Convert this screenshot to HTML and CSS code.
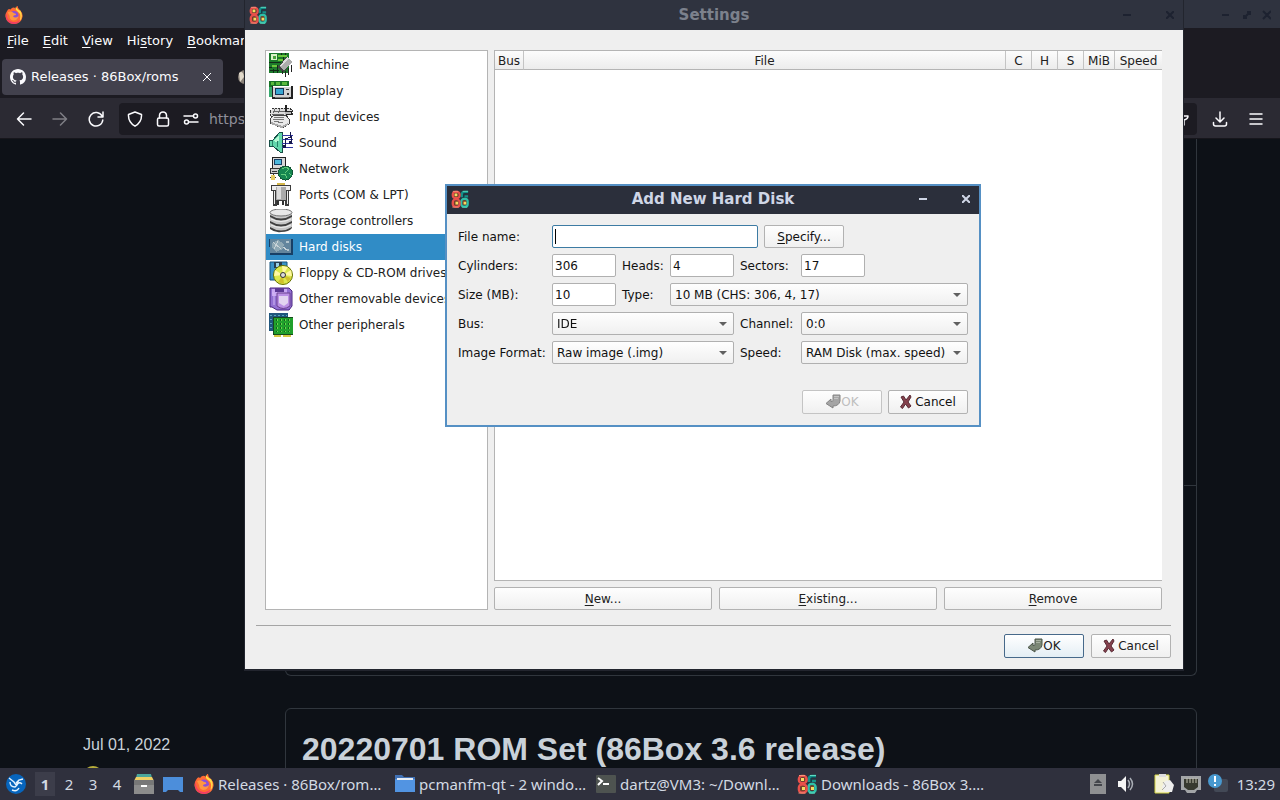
FILE: index.html
```html
<!DOCTYPE html>
<html lang="en">
<head>
<meta charset="utf-8">
<title>Add New Hard Disk</title>
<link rel="stylesheet" href="styles.css">
</head>
<body>
<svg class="defs" aria-hidden="true">
  <symbol id="box86" viewBox="0 0 20 20">
    <path d="M11 9V4Q11 1 14 1H19V4H15V7H19" fill="#123f48"/>
    <g fill="none" stroke-width="2.6">
      <path d="M12 8V5Q12 2 15 2H19M15 7h4" stroke="#15918a"/>
      <rect x="11.500" y="10" width="7" height="8.500" rx="3" stroke="#2fc0a8"/>
      <rect x="2" y="2" width="7.500" height="7" rx="3" stroke="#e8504a"/>
      <rect x="2" y="10.500" width="7.500" height="8" rx="3" stroke="#e8504a"/>
    </g>
    <path d="M3.500 3.500h4.500v4H3.500zM3.500 12h4.500v5H3.500zM13 11.500h4v5h-4z" fill="#7b4428"/>
    <path d="M4 4h3v3H4zM5 13h3v3H5zM14 13h3v3h-3z" fill="#f5dc62"/>
    <path d="M2 1.500h6M1.500 19h7" stroke="#f9937a" fill="none"/>
    <path d="M13 1.500h6M12 19h6" stroke="#5fdcc0" fill="none"/>
  </symbol>
  <symbol id="firefox" viewBox="0 0 20 20">
    <path d="M2 6Q4 2 6 4Q9 0 12 3Q13-1 14 0Q14 3 17 5Q20 8 19.500 12Q18 20 10 20Q2 20 .5 12Q0 9 2 6Z" fill="#ff6a34"/>
    <path d="M12 1Q15 5 17 5Q21 12 16 17Q19 9 14 6Q11 4 12 1Z" fill="#ffdc46"/>
    <path d="M2 7Q1 14 6 17Q12 20 17 15Q15 20 9 20Q1 18 1 11Z" fill="#f03c68"/>
    <circle cx="10" cy="10.500" r="5" fill="#8a50d8"/>
    <path d="M3 7Q7 5 10 8Q13 8 12 10Q9 10 9 12Q12 14 15 11Q14 16 9 16Q5 15 5 11Z" fill="#ff9740"/>
  </symbol>
  <symbol id="enter" viewBox="0 0 16 16">
    <path d="M8 1H15V7Q14 12 8 12V14L1 9.500L6 5V7.500Q9 8 8 5Z" fill="#7b8775" stroke="#4b5548"/>
    <path d="M9 2.500H14M9 4.500H13" stroke="#a7b0a0"/>
  </symbol>
  <symbol id="cross" viewBox="0 0 12 14">
    <path d="M1 2L3.500 1L6 5L10 0L11 2L8 7L11 11L8.500 13L5.500 9L2.500 13.500L.5 12L4 7Z" fill="#85414d" stroke="#582a34"/>
  </symbol>
</svg>

<main class="desktop">
  <section class="browser" aria-label="Firefox">
    <header class="browser-title">
      <svg class="i18"><use href="#firefox"/></svg>
      <svg class="browser-controls" viewBox="0 0 50 12" aria-hidden="true"><path d="M1 6h7M23 9l6-6M26 3h3v3M23 6v3h3M42 2l8 8M50 2l-8 8"/></svg>
    </header>
    <nav class="menubar"><a href="#"><u>F</u>ile</a><a href="#"><u>E</u>dit</a><a href="#"><u>V</u>iew</a><a href="#">Hi<u>s</u>tory</a><a href="#"><u>B</u>ookmarks</a></nav>
    <div class="tabs">
      <div class="tab">
        <svg class="i16" viewBox="0 0 16 16"><path fill="#fbfbfe" d="M8 0C3.580 0 0 3.580 0 8c0 3.540 2.290 6.530 5.470 7.590.4.070.55-.17.55-.38 0-.19-.01-.82-.01-1.490-2.010.37-2.530-.49-2.690-.94-.09-.23-.48-.94-.82-1.130-.28-.15-.68-.52-.01-.53.63-.01 1.080.58 1.230.82.72 1.210 1.870.87 2.330.66.070-.52.28-.87.51-1.070-1.780-.2-3.640-.89-3.640-3.950 0-.87.31-1.590.82-2.150-.08-.2-.36-1.020.08-2.120 0 0 .67-.21 2.200.82.64-.18 1.320-.27 2-.27s1.360.09 2 .27c1.530-1.040 2.200-.82 2.200-.82.44 1.100.16 1.920.08 2.120.51.56.82 1.270.82 2.150 0 3.070-1.870 3.750-3.650 3.950.29.25.54.73.54 1.480 0 1.070-.01 1.930-.01 2.200 0 .21.15.46.55.38A8 8 0 0016 8c0-4.420-3.580-8-8-8z"/></svg>
        <span>Releases · 86Box/roms</span>
        <button class="tab-close" aria-label="Close tab"><svg viewBox="0 0 8 8"><path d="M0 0l8 8M8 0L0 8"/></svg></button>
      </div>
      <svg class="i16" viewBox="0 0 16 16"><circle cx="8" cy="8" r="7" fill="#8a8279"/><path d="M2 4Q6 1 7 8L3 13Z" fill="#e2dacb"/></svg>
    </div>
    <div class="toolbar">
      <button aria-label="Back"><svg class="line" viewBox="0 0 16 16"><path d="M15 8H1.500M7.500 2L1.500 8l6 6"/></svg></button>
      <button aria-label="Forward" class="dim"><svg class="line" viewBox="0 0 16 16"><path d="M1 8h13.500M8.500 2l6 6-6 6"/></svg></button>
      <button aria-label="Reload"><svg class="line" viewBox="0 0 16 16"><path d="M14 5A6.800 6.800 0 1 0 14.800 9M15 1v5h-5"/></svg></button>
      <div class="urlbar">
        <svg class="line" viewBox="0 0 16 16"><path d="M8 1L14.500 3.500Q15 11 8 15.200Q1 11 1.500 3.500Z"/></svg>
        <svg class="line" viewBox="0 0 16 16"><rect x="2.500" y="7" width="11" height="8" rx="1.500"/><path d="M4.500 7V4Q5 1 8 1T11.500 4V7"/></svg>
        <svg class="line" viewBox="0 0 16 16"><path d="M1 5h9M6 11h9"/><circle cx="12.500" cy="5" r="2"/><circle cx="3.500" cy="11" r="2"/></svg>
        <span>https</span>
        <svg class="line star" viewBox="0 0 16 16"><path d="M8 5h7q0 3-4 4v5"/></svg>
      </div>
      <button aria-label="Downloads"><svg class="line" viewBox="0 0 16 16"><path d="M8 1v9.500M4 7l4 4 4-4M1.500 11.500V13q0 2 2 2h9q2 0 2-2v-1.500"/></svg></button>
      <button aria-label="Menu"><svg class="line" viewBox="0 0 16 16"><path d="M2 3h12M2 8h12M2 13h12"/></svg></button>
    </div>
    <div class="page">
      <div class="release previous"><div class="card"><div class="rule"></div></div></div>
      <article class="release">
        <div class="meta"><time>Jul 01, 2022</time><span class="avatar"></span></div>
        <div class="card"><h1>20220701 ROM Set (86Box 3.6 release)</h1></div>
      </article>
    </div>
  </section>

  <section class="window settings" aria-label="Settings">
    <header class="titlebar">
      <svg class="i18"><use href="#box86"/></svg><h2>Settings</h2>
      <span class="controls"><button aria-label="Minimize"><svg viewBox="0 0 8 8"><path d="M0 4h8"/></svg></button><button aria-label="Close"><svg viewBox="0 0 8 8"><path d="M0 0l8 8M8 0L0 8"/></svg></button></span>
    </header>
    <div class="settings-body">
      <div class="panes">
        <ul class="categories">
          <li><svg viewBox="0 0 24 24" shape-rendering="crispEdges"><path d="M0 0h20v20H0z" fill="#1c7a2b"/><path d="M9 2h9v2H9zM9 6h7v2H9zM3 12h5v2H3z" fill="#6cc63c"/><path d="M2 1h6v6H2z" fill="#d9f1c6"/><path d="M4 3h3v3H4z" fill="#48a13b"/><path d="M0 9h12M0 14h3M8 12v8M4 16v4M12 0v2M16 0v2M1 17h9M14 4v4" stroke="#122a18" fill="none"/><path d="M9 14L18 3l5 6-9 11z" fill="#444"/><path d="M11 13L18 4l5 5-8 9z" fill="#adadad"/><path d="M11 13L18 4l2 1-8 9z" fill="#dedede"/><path d="M13 18v3M16 18v6M19 15v7M22 12v7" stroke="#222"/></svg>Machine</li>
          <li><svg viewBox="0 0 24 24" shape-rendering="crispEdges"><path d="M0 2h20v13H0z" fill="#187325"/><path d="M2 3h3v3H2zM7 3h4v3H7zM13 3h5v3h-5z" fill="#59b93c"/><path d="M0 8h4v10H0z" fill="#35a96d"/><path d="M3 7h21v13H3z" fill="#222"/><path d="M4 7h18v11H4z" fill="#d2d2d2"/><path d="M4 7h18v1H4z" fill="#fff"/><path d="M6 9h9v7H6z" fill="#173155"/><path d="M7 10h7v5H7z" fill="#38a6d1"/><path d="M17 10h3v1h-3M18 14h2v2h-2" fill="#333"/><path d="M6 18h14" stroke="#777"/></svg>Display</li>
          <li><svg viewBox="0 0 24 24" shape-rendering="crispEdges"><path d="M1 6L5 3H20L23 5V9H20L18 12H3L1 9Z" fill="#ddd" stroke="#333" stroke-dasharray="2 1"/><path d="M4 6h12M3 9h12M6 4l-2 4M11 4l-2 4" stroke="#666"/><path d="M16 7V0h1v6h5v3h-5v3" fill="#bbb" stroke="#222"/><path d="M1 14L5 10H16L20 14V19L13 23L1 18Z" fill="#e9e9e9" stroke="#444"/><path d="M5 12h10M4 14h11M5 16l9 2" stroke="#777"/><path d="M2 18l11 4 6-3" fill="none" stroke="#aaa" stroke-width="2"/></svg>Input devices</li>
          <li><svg viewBox="0 0 24 24" shape-rendering="crispEdges"><path d="M0 9h4l7-8h2v20h-2l-7-6H0z" fill="#62d6ac" stroke="#174d45"/><path d="M5 9l5-5v6L6 11z" fill="#b4f9d3"/><path d="M3 10v5M8 10v6" stroke="#278368"/><path d="M13 4.500h11M13 8.500h11M13 12.500h11M13 16.500h11" stroke="#3338a4"/><path d="M16 15V8l6-2v6M21 1v5" stroke="#16184e" fill="none"/><path d="M14 14h3v3h-3zM20 10h3v3h-3z" fill="#16184e"/></svg>Sound</li>
          <li><svg viewBox="0 0 24 24" shape-rendering="crispEdges"><path d="M3 0h13v11H3z" fill="#d7d7d7" stroke="#222"/><path d="M5 2h8v6H5z" fill="#183f66"/><path d="M6 3h6v4H6z" fill="#4db8dc"/><path d="M1 11h12v5H1z" fill="#ccc" stroke="#333"/><path d="M3 14h5M4 17v5M1 20h6" stroke="#333"/><path d="M2 18h4v5H2z" fill="#e6cc62"/><circle cx="16.500" cy="16" r="7" fill="#168650" stroke="#125636"/><path d="M13 12l4-2 3 2-4 4M12 17h4l2 4M20 16l2 2" stroke="#62cc7a" fill="none"/></svg>Network</li>
          <li><svg viewBox="0 0 24 24" shape-rendering="crispEdges"><path d="M8 0h8v3H8z" fill="#d5b749"/><path d="M2 2h20v6h-2v15h-4v-5H8v5H4V8H2z" fill="#3c3c3c"/><path d="M3 3h18v4H3z" fill="#eee"/><path d="M7 4h10v13H7z" fill="#aaa"/><path d="M8 4h4v12H8z" fill="#ddd"/><path d="M5 8h1v13H5M18 8h1v13h-1" fill="#eee"/><path d="M9 18v4M14 18v4" stroke="#333" stroke-width="2"/></svg>Ports (COM &amp; LPT)</li>
          <li><svg viewBox="0 0 24 24"><path d="M1 4v16q5 4 11 3 8 0 11-4V4" fill="#3f3f3f"/><path d="M1 14q11 7 22 0v4q-11 7-22 0zM1 8q11 7 22 0v4q-11 7-22 0zM1 3q11 7 22 0v3q-11 7-22 0z" fill="#c6c6c6"/><ellipse cx="12" cy="3.500" rx="11" ry="3.500" fill="#e8e8e8" stroke="#777"/><path d="M2 10q10 5 20 0M2 16q10 5 20 0" stroke="#eee" fill="none"/></svg>Storage controllers</li>
          <li class="selected"><svg viewBox="0 0 24 24" shape-rendering="crispEdges"><path d="M0 4h24v16H1z" fill="#183f65"/><path d="M1 4h21v14H1z" fill="#63859d"/><path d="M3 8l6-3 6 4-1 5-7 3-4-4z" fill="#8fa8b4"/><path d="M4 7l8 7M9 6l-4 8M14 12l4 3" stroke="#c9d3d8"/><path d="M17 6h3v2h-3zM18 14h2v2h-2z" fill="#b2c4cd"/></svg>Hard disks</li>
          <li><svg viewBox="0 0 24 24"><path d="M1 1h17v18H1z" fill="#3a93c7" stroke="#15537d"/><path d="M5 1h8v6H5z" fill="#273e51"/><path d="M7 2h3v4H7z" fill="#9bd0e6"/><circle cx="14" cy="14" r="9.500" fill="#dce84c" stroke="#657000"/><path d="M14 14L6 9l-1 6zM14 14l8-5 1 6zM14 14l-1-9 6 1z" fill="#fff8a2"/><path d="M14 14l-5 7 6 2zM14 14l8 3-3 4z" fill="#d0c12b"/><circle cx="14" cy="14" r="2.500" fill="#ddd" stroke="#333"/></svg>Floppy &amp; CD-ROM drives</li>
          <li><svg viewBox="0 0 24 24"><path d="M1 1h19l3 3v15l-3 4H8l-5-3H1z" fill="#9370d3" stroke="#48257f"/><path d="M3 2h15v7H3z" fill="#c9a8f3"/><path d="M6 1h9v4H6z" fill="#5c3894"/><path d="M8 6h13v13q-7 5-13 0z" fill="#bb91e4" stroke="#6b418f"/><path d="M10 9h9v7l-4 3-5-3z" fill="#e3d5f0"/><path d="M3 6h2v12" fill="none" stroke="#d2b7f4"/></svg>Other removable devices</li>
          <li><svg viewBox="0 0 24 24" shape-rendering="crispEdges"><path d="M0 0h19v18H0z" fill="#20567d"/><path d="M1 2h17M1 6h17M1 10h17M1 14h17" stroke="#59a8bc" stroke-dasharray="2 2"/><path d="M4 4h20v17H4z" fill="#20a02c" stroke="#164b1c"/><path d="M7 6v13M11 6v13M15 6v13M19 6v13" stroke="#155f20" stroke-dasharray="2 2"/><path d="M8 6v13M12 6v13M16 6v13M20 6v13" stroke="#65d948" stroke-dasharray="2 2"/><path d="M5 22h7v2H5zM14 22h8v2h-8z" fill="#d5c943"/></svg>Other peripherals</li>
        </ul>
        <div class="disks">
          <div class="table-frame"><table><colgroup><col class="c-bus"><col><col class="c-c"><col class="c-c"><col class="c-c"><col class="c-mib"><col class="c-speed"></colgroup><thead><tr><th>Bus</th><th>File</th><th>C</th><th>H</th><th>S</th><th>MiB</th><th>Speed</th></tr></thead></table></div>
          <div class="actions"><button class="btn"><span><u>N</u>ew...</span></button><button class="btn"><span><u>E</u>xisting...</span></button><button class="btn"><span><u>R</u>emove</span></button></div>
        </div>
      </div>
      <footer class="buttons"><button class="btn default"><svg class="i16"><use href="#enter"/></svg>OK</button><button class="btn"><svg class="i-cross"><use href="#cross"/></svg>Cancel</button></footer>
    </div>
  </section>

  <section class="window dialog" role="dialog" aria-label="Add New Hard Disk">
    <header class="titlebar">
      <svg class="i18"><use href="#box86"/></svg><h2>Add New Hard Disk</h2>
      <span class="controls"><button aria-label="Minimize"><svg viewBox="0 0 8 8"><path d="M0 4h8"/></svg></button><button aria-label="Close"><svg viewBox="0 0 8 8"><path d="M0 0l8 8M8 0L0 8"/></svg></button></span>
    </header>
    <form class="dialog-body">
      <div class="fields">
        <label for="file">File name:</label>
        <div class="file-row"><input id="file" type="text" autofocus><i class="caret"></i><button type="button" class="btn"><span><u>S</u>pecify...</span></button></div>
        <label for="cyl">Cylinders:</label><input id="cyl" type="text" value="306">
        <label for="heads">Heads:</label><input id="heads" type="text" value="4">
        <label for="sectors">Sectors:</label><input id="sectors" class="short" type="text" value="17">
        <label for="size">Size (MB):</label><input id="size" type="text" value="10">
        <label for="type">Type:</label><div class="select span3"><select id="type"><option>10 MB (CHS: 306, 4, 17)</option></select></div>
        <label for="bus">Bus:</label><div class="select span3"><select id="bus"><option>IDE</option></select></div>
        <label for="channel">Channel:</label><div class="select"><select id="channel"><option>0:0</option></select></div>
        <label for="format">Image Format:</label><div class="select span3"><select id="format"><option>Raw image (.img)</option></select></div>
        <label for="speed">Speed:</label><div class="select"><select id="speed"><option>RAM Disk (max. speed)</option></select></div>
      </div>
      <div class="buttons"><button type="button" class="btn" disabled><svg class="i16"><use href="#enter"/></svg>OK</button><button type="button" class="btn"><svg class="i-cross"><use href="#cross"/></svg>Cancel</button></div>
    </form>
  </section>
</main>

<footer class="taskbar">
  <button class="start" aria-label="Applications"><svg viewBox="0 0 20 20"><circle cx="10" cy="10" r="10" fill="#0765bd"/><path d="M3 4l5 4 2 3 3-5 4-1M4 8q0 5 5 5l2-2q2-4 5-1M6 16q5 2 7-2M13 6l-3 3" fill="none" stroke="#e4f3ff" stroke-width="1.400"/></svg></button>
  <nav class="desks"><button class="on">1</button><button>2</button><button>3</button><button>4</button></nav>
  <div class="launch">
    <button aria-label="File manager"><svg viewBox="0 0 20 20"><path d="M3 0h14l1 4H2z" fill="#4ba69b"/><path d="M2 3h16l2 4H0z" fill="#f0cf65"/><path d="M0 6h20v14H0z" fill="#8c8c8c"/><path d="M0 6h20v5H0z" fill="#777"/><path d="M7 11h6v2H7z" fill="#fff"/></svg></button>
    <button aria-label="Show desktop"><svg viewBox="0 0 20 20"><path d="M0 3h20v15h-3l-2-2H5l-2 2H0z" fill="#4c8edb"/></svg></button>
  </div>
  <div class="tasks">
    <button><svg><use href="#firefox"/></svg><span>Releases · 86Box/rom…</span></button>
    <button><svg viewBox="0 0 20 20"><path d="M0 1h7l2 2h11v15H0z" fill="#4171b5"/><path d="M0 5h20v13H0z" fill="#5294e2"/><path d="M2 4h16v2H2z" fill="#e8eef5"/></svg><span>pcmanfm-qt - 2 windo…</span></button>
    <button><svg viewBox="0 0 20 20"><rect y="1" width="20" height="18" rx="1" fill="#4e5350"/><path d="M2 4l4 3-4 4M7 10h6" fill="none" stroke="#fff" stroke-width="2"/></svg><span>dartz@VM3: ~/Downl…</span></button>
    <button><svg><use href="#box86"/></svg><span>Downloads - 86Box 3.…</span></button>
  </div>
  <div class="tray">
    <svg class="eject" viewBox="0 0 16 20"><path d="M0 0h16v20H0z" fill="#8f9092"/><path d="M4 9l4-4 4 4zM4 10h8v2H4z" fill="#44464c"/></svg>
    <svg class="volume" viewBox="0 0 16 20"><path d="M0 7h3l5-5v16l-5-5H0z" fill="#f5f5f5"/><path d="M10 6q3 4 0 8M12 4q5 6 0 12" fill="none" stroke="#a9adb5" stroke-width="1.500"/></svg>
    <svg viewBox="0 0 20 20"><path d="M1 1h14v18H1z" fill="#f4f2d6" stroke="#d6d548"/><path d="M5 0h7v3H5z" fill="#ddd"/><path d="M11 7l5-1 4 5-2 7h-7l-3-5z" fill="#eee"/><path d="M9 8l3 4-4 4" stroke="#aaa" fill="none"/></svg>
    <svg viewBox="0 0 20 20"><path d="M0 2h20v14h-4l-2 3H6l-2-3H0z" fill="#a3a5a7"/><path d="M3 5h14v8l-4 3H7l-4-3z" fill="#37392f"/><path d="M6 4v5M9 4v5M12 4v5M15 4v5" stroke="#c2c0ae"/></svg>
    <svg viewBox="0 0 20 20"><rect x="6" y="5" width="14" height="13" rx="2" fill="#434956"/><circle cx="7" cy="7" r="7" fill="#4898ce"/><path d="M7 2v6M7 10v2" stroke="#fff" stroke-width="2"/></svg>
    <time>13:29</time>
  </div>
</footer>
</body>
</html>
```
FILE: styles.css
```css
* { box-sizing: border-box; }
body { margin: 0; height: 100vh; display: flex; flex-direction: column; overflow: hidden; background: #0d1117; color: #202020; font: 12px/16px "DejaVu Sans", sans-serif; }
button, input, select { font: inherit; color: inherit; margin: 0; }
button { padding: 0; border: 0; background: none; }
svg { display: block; flex: none; }
.defs { position: absolute; width: 0; height: 0; }
.i16 { width: 16px; height: 16px; }
.i18 { width: 18px; height: 18px; }
.i-cross { width: 12px; height: 14px; margin-right: 3px; }
u { text-decoration: underline; text-underline-offset: 2px; }

.desktop { position: relative; flex: 1; min-height: 0; display: flex; overflow: hidden; }
.browser { flex: 1; display: flex; flex-direction: column; min-width: 0; color: #fbfbfe; font: 13px/20px "DejaVu Sans", sans-serif; }
.browser-title { display: flex; align-items: center; justify-content: space-between; height: 28px; padding: 2px 9px 0 5px; background: #2f333f; }
.browser-controls { width: 50px; height: 12px; fill: none; stroke: #1d2230; stroke-width: 2; }
.menubar { display: flex; gap: 14px; height: 28px; padding: 3px 7px; background: #1c1b22; }
.menubar a { color: inherit; text-decoration: none; }
.tabs { display: flex; align-items: center; gap: 14px; height: 42px; padding: 0 2px; background: #1c1b22; }
.tab { display: flex; align-items: center; gap: 5px; width: 221px; height: 36px; padding: 0 8px; border-radius: 4px; background: #42414d; white-space: nowrap; }
.tab-close { display: flex; margin-left: auto; padding: 4px; }
.tab-close svg { width: 8px; height: 8px; stroke: #fbfbfe; }
.toolbar { display: flex; align-items: center; gap: 20px; height: 41px; padding: 2px 16px 0; background: #2b2a33; border-bottom: 1px solid #17161c; }
.line { width: 16px; height: 16px; fill: none; stroke: #fbfbfe; stroke-width: 1.5; stroke-linecap: round; stroke-linejoin: round; }
.dim { opacity: .4; }
.urlbar { flex: 1; display: flex; align-items: center; gap: 12px; height: 32px; margin-left: -5px; margin-right: -5px; padding: 0 8px; border-radius: 4px; background: #1c1b22; color: #8f8f99; font-size: 14px; }
.urlbar span { margin-left: -2px; }
.star { margin-left: auto; }

.page { flex: 1; min-height: 0; display: flex; flex-direction: column; gap: 32px; padding: 0 83px; overflow: hidden; background: #0d1117; color: #c9d1d9; font: 16px/24px "Liberation Sans", Arial, sans-serif; }
.release { display: grid; grid-template-columns: 202px 1fr; flex: none; }
.card { border: 1px solid #30363d; border-radius: 6px; padding: 16px; }
.previous { height: 537px; }
.previous .card { grid-column: 2; padding: 0; border-top: 0; border-radius: 0 0 6px 6px; }
.rule { height: 347px; border-bottom: 1px solid #30363d; }
.meta { padding-top: 25px; }
.meta time { display: block; }
.avatar { display: block; width: 20px; height: 20px; margin-top: 9px; border-radius: 50%; background: #b6ad3b; }
.card h1 { margin: 0; font-size: 32px; line-height: 48px; white-space: nowrap; }

.window { position: absolute; display: flex; flex-direction: column; background: #efefef; }
.titlebar { display: grid; grid-template-columns: 60px 1fr 60px; align-items: center; background: #2b2f3b; color: #cfd6e6; }
.titlebar h2 { margin: 0; text-align: center; font-size: 15px; line-height: 20px; white-space: nowrap; }
.titlebar > svg { margin-left: 4px; }
.controls { display: flex; justify-content: space-between; }
.controls svg { width: 8px; height: 8px; fill: none; stroke: currentColor; stroke-width: 2; }
.settings { left: 244px; top: 0; width: 940px; border: solid #22252e; border-width: 0 1px 2px; }
.settings .titlebar { height: 30px; background: #2f333f; color: #7c818c; }
.settings .controls { color: #1d2230; padding-right: 9px; }
.settings-body { padding: 11px 12px 11px 11px; }
.panes { display: grid; grid-template-columns: 223px 1fr; gap: 6px; min-height: 585px; padding: 9px 9px 15px; border-bottom: 1px solid #a5a5a5; }
.categories { margin: 0; padding: 1px 0 0; list-style: none; overflow: hidden; background: #fff; border: 1px solid #b4b4b4; white-space: nowrap; }
.categories li { display: flex; align-items: center; gap: 6px; height: 26px; padding-left: 3px; }
.categories svg { width: 24px; height: 24px; }
.selected { background: #308cc6; color: #fff; }
.disks { display: flex; flex-direction: column; gap: 6px; min-width: 0; }
.table-frame { flex: 1; background: #fff; border: 1px solid #b4b4b4; border-right: 0; }
table { width: 100%; table-layout: fixed; border-collapse: separate; border-spacing: 0; }
th { height: 19px; padding: 1px 0 0; font-weight: normal; background: linear-gradient(#fcfcfc, #ececec); border-right: 1px solid #c4c4c4; border-bottom: 1px solid #b4b4b4; }
th:last-child { border-right: 0; }
.c-bus { width: 29px; }
.c-c { width: 26px; }
.c-mib { width: 31px; }
.c-speed { width: 47px; }
.actions { display: grid; grid-template-columns: 1fr 1fr 1fr; gap: 7px; }
.btn { display: flex; align-items: center; justify-content: center; height: 24px; min-width: 80px; border: 1px solid #b2b2b2; border-radius: 2px; background: linear-gradient(#fefefe, #f0f0f0); white-space: nowrap; }
.actions .btn, .fields .btn { height: 23px; }
.btn:disabled { color: #bebebe; border-color: #c4c4c4; }
.btn:disabled svg { filter: grayscale(1); opacity: .7; }
.default { border-color: #47698a; background: linear-gradient(#fff, #e4eef4); }
.buttons { display: flex; justify-content: flex-end; gap: 6px; }
.settings .buttons { gap: 7px; padding-top: 8px; }

.dialog { left: 445px; top: 184px; width: 536px; border: 2px solid #5590c4; }
.dialog .titlebar { height: 28px; padding-bottom: 2px; }
.dialog .controls { padding-right: 9px; }
.dialog-body { display: flex; flex-direction: column; gap: 26px; padding: 11px; color: #111; }
.fields { display: grid; grid-template-columns: 88px 64px 42px 64px 55px 1fr; gap: 6px; align-items: center; white-space: nowrap; }
.fields input, select { width: 100%; min-width: 0; height: 23px; padding: 0 2px; border: 1px solid #b0b0b0; border-radius: 2px; background: #fff; outline: 0; }
.fields .short { width: 64px; }
.fields .file-row { position: relative; display: flex; gap: 6px; grid-column: 2 / -1; }
.fields .file-row input { width: 206px; border-color: #3d7ba3; caret-color: transparent; }
.caret { position: absolute; left: 3px; top: 4px; width: 1px; height: 15px; background: #000; }
.select { position: relative; }
.span3 { grid-column: span 3; }
select { display: block; appearance: none; padding: 0 4px; background: linear-gradient(#fefefe, #f0f0f0); }
.select::after { content: ""; position: absolute; right: 7px; top: 10px; border: 4px solid transparent; border-top-color: #606060; border-bottom: 0; pointer-events: none; }
.span3:has(#type) { grid-column: 4 / -1; }

.taskbar { display: flex; align-items: center; flex: none; height: 32px; padding: 0 5px 0 6px; background: #2f303d; color: #d3dae3; font: 15px/20px "Noto Sans", sans-serif; }
.taskbar svg { width: 20px; height: 20px; }
.desks { display: flex; gap: 4px; margin-left: 9px; }
.desks button { width: 20px; height: 24px; }
.desks .on { background: #3c3d4a; font-weight: bold; }
.launch { display: flex; gap: 9px; margin-left: 7px; }
.tasks { flex: 1; display: flex; gap: 7px; min-width: 0; margin-left: 11px; }
.tasks button { display: flex; align-items: center; gap: 4px; width: 194px; white-space: nowrap; overflow: hidden; }
.tray { display: flex; align-items: center; gap: 7px; }
.tray .eject { width: 16px; margin-right: 5px; }
.tray .volume { width: 16px; margin-right: 13px; }
.tray time { margin-left: 2px; }
```
